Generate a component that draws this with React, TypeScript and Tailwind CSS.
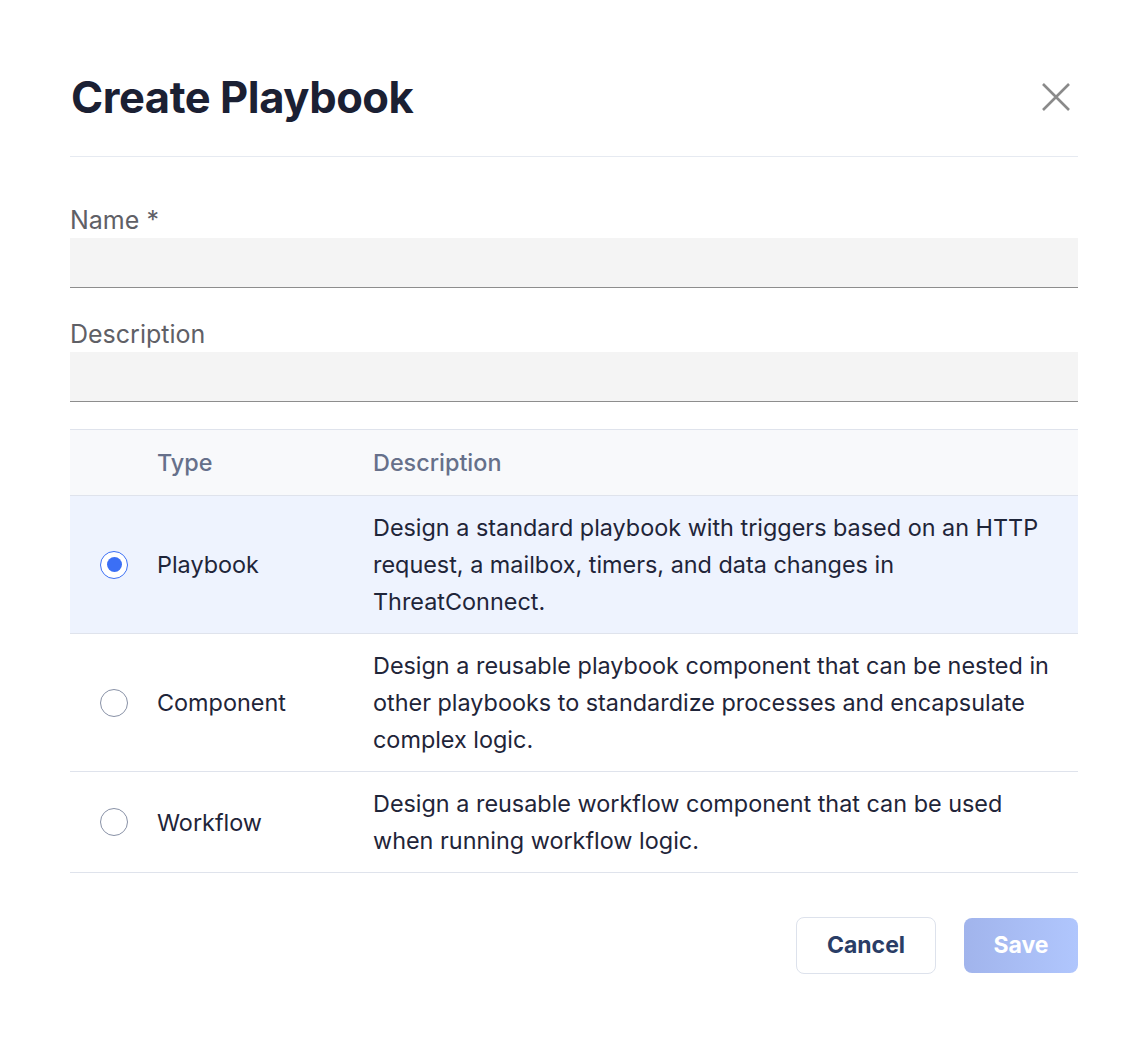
import { useState } from "react";

// Dialogo "Create Playbook": nombre, descripcion y tipo de playbook a crear.

const font = { fontFamily: "Inter, 'Noto Sans', sans-serif" };

type PlaybookType = {
  id: string;
  label: string;
  text: string;
};

const types: PlaybookType[] = [
  {
    id: "playbook",
    label: "Playbook",
    text: "Design a standard playbook with triggers based on an HTTP request, a mailbox, timers, and data changes in ThreatConnect.",
  },
  {
    id: "component",
    label: "Component",
    text: "Design a reusable playbook component that can be nested in other playbooks to standardize processes and encapsulate complex logic.",
  },
  {
    id: "workflow",
    label: "Workflow",
    text: "Design a reusable workflow component that can be used when running workflow logic.",
  },
];

function Radio({ checked }: { checked: boolean }) {
  return (
    <span
      className={
        checked
          ? "flex h-[28px] w-[28px] items-center justify-center rounded-full border-[1.5px] border-[#3b6ff5] bg-white"
          : "flex h-[28px] w-[28px] items-center justify-center rounded-full border-[1.5px] border-[#8891a6] bg-white"
      }
    >
      {checked && <span className="h-[15px] w-[15px] rounded-full bg-[#3b6ff5]" />}
    </span>
  );
}

export default function App() {
  const [selected, setSelected] = useState("playbook");

  return (
    <div style={font} className="min-h-[1048px] w-full bg-white px-[70px] pt-[73px] text-[#1f2539]">
      <div className="flex items-center justify-between border-b border-[#e6eaf1] pb-[35px]">
        <h1 className="pl-[1px] text-[43.5px] font-bold leading-[48px] tracking-[-0.01em] text-[#1b2033]">
          Create Playbook
        </h1>
        <button type="button" className="mr-[2px] flex h-[40px] w-[40px] items-center justify-center text-[#8a8a8a]">
          <svg width="32" height="32" viewBox="0 0 32 32" fill="none" stroke="currentColor" strokeWidth="2.6">
            <path d="M3 3 L29 29 M29 3 L3 29" />
          </svg>
        </button>
      </div>

      <label className="mt-[48px] mb-[3px] block text-[25px] leading-[30px] text-[#5f6066]">Name *</label>
      <input className="block h-[50px] w-full border-b border-[#8d8d8d] bg-[#f4f4f4] px-4 text-[22px] outline-none" />

      <label className="mt-[31px] mb-[3px] block text-[25px] leading-[30px] text-[#5f6066]">Description</label>
      <input className="block h-[50px] w-full border-b border-[#8d8d8d] bg-[#f4f4f4] px-4 text-[22px] outline-none" />

      <table className="mt-[27px] w-full border-collapse text-left text-[23.4px]">
        <thead>
          <tr className="h-[66px] border-y border-[#dfe3ec] bg-[#f8f9fb]">
            <th className="w-[87px]" />
            <th className="w-[216px] font-medium text-[#66708a]">Type</th>
            <th className="font-medium text-[#66708a]">Description</th>
          </tr>
        </thead>
        <tbody>
          {types.map((t) => (
            <tr
              key={t.id}
              onClick={() => setSelected(t.id)}
              className={
                selected === t.id
                  ? "cursor-pointer border-b border-[#dfe3ec] bg-[#eef3fe]"
                  : "cursor-pointer border-b border-[#dfe3ec] bg-white"
              }
            >
              <td className="pl-[30px] align-middle">
                <Radio checked={selected === t.id} />
              </td>
              <td className="align-middle leading-[37px]">{t.label}</td>
              <td className="py-[13px] pr-[24px] leading-[37px]">{t.text}</td>
            </tr>
          ))}
        </tbody>
      </table>

      <div className="mt-[44px] flex justify-end gap-[28px]">
        <button
          type="button"
          className="h-[57px] w-[140px] rounded-[8px] border-[1.5px] border-[#dde2ec] bg-white text-[23px] font-bold text-[#2a3d66]"
        >
          Cancel
        </button>
        <button
          type="button"
          disabled
          className="mt-[1px] h-[55px] w-[114px] rounded-[8px] bg-[linear-gradient(90deg,#a1b4ec,#b0c6fd)] text-[23px] font-bold text-white"
        >
          Save
        </button>
      </div>
    </div>
  );
}
